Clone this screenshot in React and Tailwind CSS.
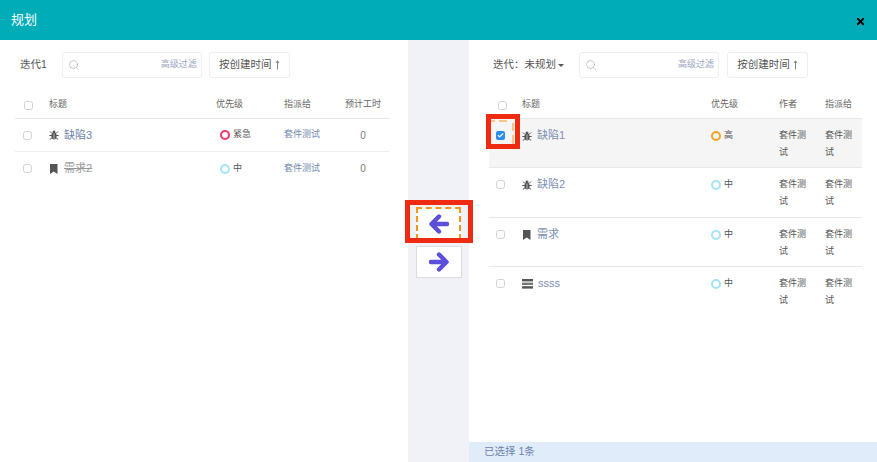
import { Search, X, Check } from "lucide-react";

const FONT = "[font-family:'Liberation_Sans','Noto_Sans_CJK_SC',sans-serif]";

function Checkbox({ checked }) {
  if (checked) {
    return (
      <span className="flex h-[9px] w-[9px] items-center justify-center rounded-[2px] bg-[#2d8cf0]">
        <Check size={7} strokeWidth={4} className="text-white" />
      </span>
    );
  }
  return <span className="block h-[9px] w-[9px] rounded-[2.5px] border-[1.5px] border-[#d2d2d2] bg-white" />;
}

function TypeIcon({ type }) {
  if (type === "bug") {
    return (
      <svg width="10" height="10" viewBox="0 0 10 10" className="shrink-0">
        <ellipse cx="5" cy="6" rx="2.6" ry="3.4" fill="#555" />
        <circle cx="5" cy="2" r="1.5" fill="#555" />
        <path d="M1 1.5 L3 3.5 M9 1.5 L7 3.5 M0.3 5.5 H9.7 M0.8 9.5 L3 7.8 M9.2 9.5 L7 7.8" stroke="#555" strokeWidth="1" fill="none" />
        <path d="M5 3.5 V9.4" stroke="#fff" strokeWidth="0.6" />
      </svg>
    );
  }
  if (type === "story") {
    return (
      <svg width="10" height="10" viewBox="0 0 10 10" className="shrink-0">
        <path d="M1 0 H8.5 V10 L4.75 7.4 L1 10 Z" fill="#555" />
      </svg>
    );
  }
  return (
    <svg width="11" height="10" viewBox="0 0 11 10" className="shrink-0">
      <rect x="0" y="0" width="11" height="2.4" fill="#555" />
      <rect x="0" y="3.6" width="11" height="2.4" fill="#777" />
      <rect x="0" y="7.2" width="11" height="2.4" fill="#555" />
    </svg>
  );
}

function Priority({ label, color }) {
  return (
    <span className="flex items-center gap-[3px] text-[9px] text-[#555]">
      <span className={`h-[10px] w-[10px] rounded-full border-2 ${color}`} />
      {label}
    </span>
  );
}

function Toolbar({ label, caret, gap, btnGap }) {
  return (
    <div className="flex items-center">
      <span className="flex items-center whitespace-nowrap text-[10.5px] text-[#555]">
        {label}
        {caret && <span className="ml-[2px] mt-[1px] border-x-[3px] border-t-[3px] border-x-transparent border-t-[#555]" />}
      </span>
      <div className={`${gap} flex h-[26px] w-[140px] items-center justify-between rounded-[3px] border border-[#eceef2] pl-[5px] pr-[4px]`}>
        <Search size={12} strokeWidth={1.3} className="text-[#aaa]" />
        <span className="text-[9px] text-[#98a6c2]">高级过滤</span>
      </div>
      <button className={`${btnGap} flex h-[26px] w-[81px] items-center justify-center gap-[3px] rounded-[3px] border border-[#eceef2] text-[10.5px] text-[#555]`}>
        按创建时间
        <svg width="5" height="10" viewBox="0 0 5 10">
          <path d="M2.5 9.5 V1 M1 3 L2.5 0.8 L4 3" stroke="#777" strokeWidth="0.9" fill="none" />
        </svg>
      </button>
    </div>
  );
}

const leftRows = [
  { type: "bug", title: "缺陷3", label: "紧急", color: "border-[#f0386b]" },
  { type: "story", title: "需求2", label: "中", color: "border-[#a5e3f8]", done: true },
];

const rightRows = [
  { type: "bug", title: "缺陷1", label: "高", color: "border-[#f5a623]", checked: true },
  { type: "bug", title: "缺陷2", label: "中", color: "border-[#a5e3f8]" },
  { type: "story", title: "需求", label: "中", color: "border-[#a5e3f8]" },
  { type: "task", title: "ssss", label: "中", color: "border-[#a5e3f8]" },
];

function LeftTable() {
  return (
    <div className="mx-[15px] mt-[14px] w-[374px]">
      <div className="flex h-[27px] items-center border-b border-[#e6e6e6] text-[9px] text-[#666]">
        <span className="w-[34px] pl-[9px]"><Checkbox /></span>
        <span className="w-[167px]">标题</span>
        <span className="w-[68px]">优先级</span>
        <span className="w-[61px]">指派给</span>
        <span>预计工时</span>
      </div>
      {leftRows.map((r, i) => (
        <div key={r.title} className={`flex h-[33px] items-center ${i === 0 ? "border-b border-[#ececec]" : ""}`}>
          <span className="w-[34px] pl-[8px]"><Checkbox /></span>
          <span className="flex w-[167px] items-center gap-[5px]">
            <TypeIcon type={r.type} />
            <span className={`text-[11px] ${r.done ? "text-[#999] line-through" : "text-[#6d83ad]"}`}>{r.title}</span>
          </span>
          <span className="w-[68px] pl-[4px]"><Priority label={r.label} color={r.color} /></span>
          <span className="w-[61px] text-[9px] text-[#7088b0]">套件测试</span>
          <span className="w-[36px] text-center text-[10px] text-[#777]">0</span>
        </div>
      ))}
    </div>
  );
}

function RightTable() {
  return (
    <div className="ml-[20px] mt-[14px] w-[373px]">
      <div className="flex h-[27px] items-center border-b border-[#e6e6e6] text-[9px] text-[#666]">
        <span className="w-[33px] pl-[9px]"><Checkbox /></span>
        <span className="w-[189px]">标题</span>
        <span className="w-[68px]">优先级</span>
        <span className="w-[46px]">作者</span>
        <span>指派给</span>
      </div>
      {rightRows.map((r, i) => (
        <div
          key={r.title}
          className={`flex items-start pt-[11px] ${i === 1 ? "h-[50px]" : "h-[49px]"} ${r.checked ? "bg-[#f5f5f5]" : ""} ${i < 3 ? "border-b border-[#e8e8e8]" : ""}`}
        >
          <span className="flex h-[11px] w-[33px] items-center pl-[7px]"><Checkbox checked={r.checked} /></span>
          <span className="flex h-[11px] w-[189px] items-center gap-[5px]">
            <TypeIcon type={r.type} />
            <span className="text-[11px] text-[#7b8fb3]">{r.title}</span>
          </span>
          <span className="flex h-[11px] w-[68px] items-center"><Priority label={r.label} color={r.color} /></span>
          <span className="-mt-[3px] w-[46px] pr-[14px] text-[9px] leading-[17px] text-[#555]">套件测试</span>
          <span className="-mt-[3px] w-[30px] text-[9px] leading-[17px] text-[#555]">套件测试</span>
        </div>
      ))}
    </div>
  );
}

function BigArrow({ flip }) {
  return (
    <svg width="20" height="20" viewBox="0 0 20 20" className={flip ? "rotate-180" : ""}>
      <path d="M18 10 H3 M10 2.5 L2.5 10 L10 17.5" stroke="#5b4fdb" strokeWidth="4.4" strokeLinecap="round" strokeLinejoin="round" fill="none" />
    </svg>
  );
}

export default function App() {
  return (
    <div className={`relative flex h-[462px] w-[877px] flex-col overflow-hidden bg-white ${FONT}`}>
      <header className="flex h-[40px] shrink-0 items-center justify-between bg-[#00acb8] pl-[11px] pr-[11px]">
        <span className="text-[13px] text-white">规划</span>
        <X size={11} strokeWidth={4} className="mt-[3px] text-black" />
      </header>
      <div className="flex min-h-0 flex-1">
        <section className="w-[408px] shrink-0">
          <div className="mt-[12px] pl-[20px]"><Toolbar label="迭代1" gap="ml-[15px]" btnGap="ml-[7px]" /></div>
          <LeftTable />
        </section>
        <section className="flex w-[61px] shrink-0 flex-col items-center bg-[#f0f2f7] pt-[167px]">
          <button className="flex h-[33px] w-[45px] items-center justify-center border-2 border-dashed border-[#f7941d] bg-white">
            <BigArrow />
          </button>
          <button className="mt-[6px] flex h-[32px] w-[46px] items-center justify-center border border-[#dcdcdc] bg-white">
            <BigArrow flip />
          </button>
        </section>
        <section className="flex min-w-0 flex-1 flex-col">
          <div className="mt-[12px] pl-[24px]"><Toolbar label="迭代：未规划" caret gap="ml-[15px]" btnGap="ml-[8px]" /></div>
          <div className="flex-1"><RightTable /></div>
          <div className="flex h-[20px] items-center bg-[#e1ecfb] pl-[15px] text-[10.5px] text-[#6d83ad]">已选择 1条</div>
        </section>
      </div>
      {/* annotation boxes painted over the screenshot */}
      <div className="absolute left-[405px] top-[200px] h-[43px] w-[68px] border-[5px] border-[#ee2a10]" />
      <div className="absolute left-[486px] top-[114px] h-[35px] w-[34px] border-[5px] border-[#ee2a10]" />
      <svg width="24" height="25" viewBox="0 0 24 25" className="absolute left-[491px] top-[120px]">
        <path d="M0 1 H4 M8 1 H16 M22 3 V11 M22 15 V24" stroke="#f7941d" strokeWidth="1" fill="none" />
      </svg>
    </div>
  );
}
